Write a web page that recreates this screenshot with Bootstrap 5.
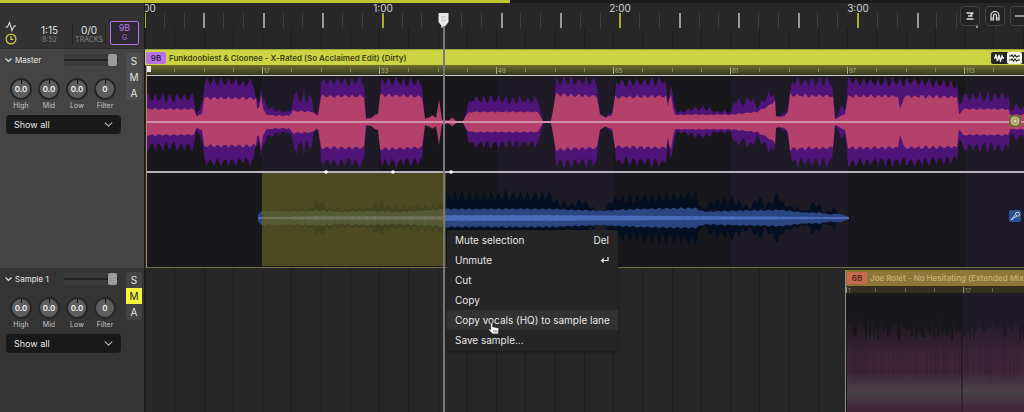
<!DOCTYPE html>
<html lang="en" data-bs-theme="dark">
<head>
<meta charset="utf-8">
<meta name="viewport" content="width=device-width, initial-scale=1">
<title>Mix editor</title>
<link href="https://cdn.jsdelivr.net/npm/bootstrap@5.3.0/dist/css/bootstrap.min.css" rel="stylesheet">
<style>
  :root { --accent: #cdd444; --side: 145px; }
  body { background: #272727; color: #e4e4e4; font: 400 9px/12px Inter, "Liberation Sans", sans-serif; overflow: hidden; }
  svg { display: block; }
  button { font: inherit; }
  .position-bar { height: 3px; background: #1b1b1b; border-radius: 0; }
  .position-bar .progress-bar { background: #bfc431; }
  .side { width: var(--side); flex: none; border-right: 1px solid #1c1c1c; }
  .top-row { height: 46px; }
  .top-row .side { background: #323232; border-bottom: 1px solid #2a2a2a; }
  .readout { font-size: 10px; line-height: 10px; text-align: center; }
  .readout small { display: block; font-size: 7px; line-height: 10px; color: #858585; }
  .status { padding: 0 5px 3px 4px; }
  .divided { border: solid #222; border-width: 0 1px; padding: 0 2px; margin-left: 14px; }
  .key-box { width: 29px; height: 24px; border: 1px solid #b673e6; border-radius: 2px; color: #b673e6; background: #2c2831; font-size: 9px; line-height: 11px; }
  .key-box small { color: inherit; }
  .track-master { height: 219px; }
  .track-master .side { background: #444; }
  .track-sample .side { background: #343434; }
  .strip { padding-right: 2px; }
  .strip-fields { padding: 1px 0 0 5px; }
  .fold { gap: 3px; color: inherit; font-size: 8px; line-height: 12px; }
  .volume { width: 54px; height: 12px; margin-right: 3px; appearance: none; background: linear-gradient(#222, #222) 0 5px / 100% 2px no-repeat #3a3a3a; border-radius: 2px; }
  .volume::-webkit-slider-thumb { appearance: none; width: 9px; height: 12px; border-radius: 2px; background: #9b9b9b; border: 0; }
  .mix-group { width: 16px; margin-top: 4px; border-radius: 3px; overflow: hidden; }
  .mix-btn { width: 16px; height: 16px; padding: 0; border: 0; border-radius: 0; background: #4c4c4c; color: #e4e4e4; font-size: 10px; line-height: 16px; }
  .track-sample .mix-btn { background: #444; }
  .track-sample .mix-btn.active { background: #f4f43c; color: #222; }
  .knobs { padding: 12px 0 0 2px; }
  .knob { width: 28px; text-align: center; font-size: 7px; line-height: 11px; color: #c4c4c4; }
  .knob output { display: block; width: 22px; height: 22px; margin: 0 auto; border: 2px solid #262626; border-radius: 50%; background: linear-gradient(#161616, #161616) center top / 1px 4px no-repeat #5e5e5e; color: #f0f0f0; font-size: 8px; font-weight: 600; line-height: 18px; padding: 0; }
  .stem-select { width: 115px; height: 19px; margin: 4px 0 0 1px; padding: 0 20px 0 8px; border: 0; border-radius: 4px; background-color: #191919; color: #e8e8e8; font-size: 9px; line-height: 19px; background-position: right 8px center; background-size: 9px 9px;
    --bs-form-select-bg-img: url("data:image/svg+xml,%3csvg xmlns='http://www.w3.org/2000/svg' viewBox='0 0 9 9'%3e%3cpath fill='none' stroke='%23ddd' stroke-width='1.3' d='M1 3l3.5 3L8 3'/%3e%3c/svg%3e"); }
  .lanes { min-width: 0; }
  .tool-strip { width: 64px; top: 3px; gap: 5px; overflow: hidden; }
  .tool { flex: none; width: 20px; height: 20px; padding: 0; border: 1px solid #444; border-radius: 4px; background: #242424; color: #ddd; display: grid; place-items: center; }
  .clip-title { height: 16px; gap: 3px; font-size: 8px; font-weight: 600; line-height: 14px; white-space: nowrap; overflow: hidden; }
  .clip-master { background: var(--accent); color: #3f4212; border-top: 1px solid #9a9f3b; }
  .clip-sample { background: #8e7639; color: #c5ad70; }
  .key-tag { width: 20px; height: 12px; margin-left: 1px; border-radius: 2px; background: #b673e6; color: #33204a; line-height: 12px; text-align: center; flex: none; }
  .clip-sample .key-tag { background: #c66a50; color: #55251b; }
  .view-switch { width: 33px; height: 12px; background: #262626; border-radius: 2px 0 0 2px; overflow: hidden; }
  .view-btn { width: 16px; height: 12px; padding: 0; border: 0; border-radius: 0; color: #fff; display: grid; place-items: center; }
  .view-btn.active { width: 15px; background: #f3f3ea; color: #222; border-radius: 2px; }
  .clip-body { border-left: 1px solid #b98a5c; margin-left: 1px; }
  .clip-outline { border-bottom: 1px solid #6d7040; }
  .sample-offset { margin: 2px 0 0 700px; border-left: 1px solid #8d8d8d; }
  .timeline-overlay { left: var(--side); }
  .playhead { left: 293px; top: 9px; bottom: 0; width: 11px; }
  .playhead::after { content: ""; flex: 1; width: 2px; background: #777; }
  .lane-menu { --bs-dropdown-bg: #252525; --bs-dropdown-padding-y: 0; --bs-dropdown-min-width: 0; --bs-dropdown-border-width: 0; --bs-dropdown-link-color: #e6e6e6; --bs-dropdown-link-hover-bg: #323232; left: 302px; top: 227px; width: 171px; padding-bottom: 1px; border-radius: 3px; font-size: 10px; line-height: 20px; box-shadow: 0 1px 3px #1118; }
  .lane-menu .dropdown-item { padding: 0 9px 0 8px; }
  .lane-menu .dropdown-item.hovered { background: #323232; }
  .hand { left: 343px; top: 319px; z-index: 1001; }
  .stem-pin { right: 3px; }
  .pin-drums { top: 50px; }
  .pin-vocals { top: 145px; }
</style>
</head>
<body>
<div class="d-flex flex-column vh-100">
  <div class="progress position-bar flex-shrink-0" role="progressbar" aria-label="Mix position" aria-valuenow="50" aria-valuemin="0" aria-valuemax="100">
    <div class="progress-bar" style="width:49.8%"></div>
  </div>

  <div class="d-flex flex-column flex-grow-1 position-relative overflow-hidden">
    <!-- status and time ruler -->
    <header class="d-flex top-row flex-shrink-0">
      <div class="side d-flex align-items-end status">
        <div class="d-flex flex-column pe-4">
          <svg width="13" height="13" viewBox="0 0 13 13" fill="none" stroke="#ddd" stroke-width="1.1"><path d="M1.500 7h2l2-4.500 2.500 8 2-4.500h2"/></svg>
          <svg width="13" height="12" viewBox="0 0 13 12" fill="none" stroke="#d3d046" stroke-width="1.200"><circle cx="7" cy="6" r="4.900"/><path d="M7 3v3.300h2.500"/></svg>
        </div>
        <div class="readout">1:15<small>8:52</small></div>
        <div class="readout divided">0/0<small>TRACKS</small></div>
        <div class="readout key-box ms-auto">9B<small>G</small></div>
      </div>
      <div class="lanes flex-grow-1 position-relative">
        <svg id="ruler" width="100%" height="46"></svg>
        <div class="tool-strip position-absolute end-0 d-flex">
          <button class="tool" aria-label="Quantize"><svg width="10" height="10" viewBox="0 0 10 10" fill="none" stroke="currentColor" stroke-width="1.300"><path d="M1.500 2h7M3 5h4.500M1.500 8h7M8 2L5.500 4.500"/></svg></button>
          <button class="tool" aria-label="Snap"><svg width="10" height="10" viewBox="0 0 10 10" fill="none" stroke="currentColor" stroke-width="1.200"><path d="M1 9V4.500a4 4 0 0 1 8 0V9H6.500V4.700a1.500 1.500 0 0 0-3 0V9zM1 7h2.500M6.500 7H9"/></svg></button>
          <button class="tool" aria-label="Zoom out"><svg width="10" height="10" viewBox="0 0 10 10" stroke="currentColor" stroke-width="1.200"><path d="M0 5h10"/></svg></button>
        </div>
      </div>
    </header>

    <!-- master track -->
    <section class="d-flex track-master flex-shrink-0">
      <div class="side" data-track="Master"></div>
      <div class="lanes flex-grow-1 clip-outline">
        <div class="clip-title clip-master d-flex align-items-center">
          <span class="key-tag">9B</span><span>Funkdoobiest &amp; Cloonee - X-Rated (So Acclaimed Edit) (Dirty)</span>
          <div class="view-switch d-flex ms-auto">
            <button class="view-btn bg-transparent" aria-label="Waveform"><svg width="10" height="8" viewBox="0 0 10 8" fill="none" stroke="currentColor" stroke-width="1.300"><path d="M0 4h1l1-3 1.500 6L5 1l1.500 6L8 2l.8 2H10"/></svg></button>
            <button class="view-btn active" aria-label="Stems"><svg width="11" height="8" viewBox="0 0 11 8" fill="none" stroke="currentColor" stroke-width="1.200"><path d="M0 2h2l1-1 1.500 2L6 1l1.500 2L9 2h2M0 6h2l1-1 1.500 2L6 5l1.500 2L9 6h2"/></svg></button>
          </div>
        </div>
        <div class="clip-body position-relative">
          <svg id="masterLane" width="100%" height="202"></svg>
          <svg class="stem-pin pin-drums position-absolute" width="12" height="12" viewBox="0 0 12 12"><rect width="12" height="12" rx="2" fill="#6f6b35"/><circle cx="6" cy="6" r="4" fill="#a7a36b" stroke="#d0cc95"/><circle cx="6" cy="6" r="1.500" fill="#ddd8a8"/></svg>
          <svg class="stem-pin pin-vocals position-absolute" width="12" height="12" viewBox="0 0 12 12"><rect width="12" height="12" rx="2" fill="#2f4f93"/><path d="M2 10l4.500-5.500 1.500 1.300zM6.500 4.500a2 2 0 1 1 1.800 1.700z" fill="none" stroke="#c7d4f0"/></svg>
        </div>
      </div>
    </section>

    <!-- sample track -->
    <section class="d-flex track-sample flex-grow-1 overflow-hidden">
      <div class="side" data-track="Sample 1" data-muted="true"></div>
      <div class="lanes flex-grow-1 position-relative">
        <svg id="sampleGrid" class="position-absolute" width="100%" height="100%"></svg>
        <div class="sample-offset position-relative">
          <div class="clip-title clip-sample d-flex align-items-center">
            <span class="key-tag">6B</span><span>Joe Rolét - No Hesitating (Extended Mix)</span>
          </div>
          <svg id="sampleLane" width="100%" height="600"></svg>
        </div>
      </div>
    </section>

    <div class="timeline-overlay position-absolute top-0 bottom-0 end-0 pe-none">
      <div class="playhead position-absolute d-flex flex-column align-items-center">
        <svg width="11" height="15" viewBox="0 0 11 15"><path d="M.5 1h10v9L7 14.500H4L.5 10z" fill="#e8e8e8"/><path d="M3 5h5M3 8h5" stroke="#bbb"/></svg>
      </div>
      <ul class="dropdown-menu lane-menu show pe-auto">
        <li><button class="dropdown-item d-flex justify-content-between">Mute selection<span>Del</span></button></li>
        <li><button class="dropdown-item d-flex justify-content-between align-items-center">Unmute<svg width="9" height="8" viewBox="0 0 9 8" fill="none" stroke="currentColor" stroke-width="1.200"><path d="M8 1v3.500H2M3.800 2.500l-2.300 2 2.300 2"/></svg></button></li>
        <li><button class="dropdown-item">Cut</button></li>
        <li><button class="dropdown-item">Copy</button></li>
        <li><button class="dropdown-item hovered">Copy vocals (HQ) to sample lane</button></li>
        <li><button class="dropdown-item">Save sample...</button></li>
      </ul>
      <svg class="hand position-absolute" width="12" height="13" viewBox="0 0 12 13"><path d="M3.500 1c.9 0 1.200.6 1.200 1.300v2.500l4.800.9c1 .2 1.500.8 1.400 1.800L10.300 12H4.600L1 8.200c-.5-.8.300-1.500 1.100-1l.5.400V2.200C2.600 1.500 2.800 1 3.500 1z" fill="#fff" stroke="#222" stroke-width=".7"/><path d="M5.700 8v2.500M7.300 8v2.500M8.900 8v2.500" stroke="#555" stroke-width=".7"/></svg>
    </div>
  </div>
</div>

<script src="https://cdn.jsdelivr.net/npm/bootstrap@5.3.0/dist/js/bootstrap.bundle.min.js"></script>
<script>
// channel strips
document.querySelectorAll('[data-track]').forEach(el => {
  const { track, muted } = el.dataset;
  const knobs = [['High', '0.0'], ['Mid', '0.0'], ['Low', '0.0'], ['Filter', '0']]
    .map(([n, v]) => `<div class="knob"><output aria-label="${n}">${v}</output>${n}</div>`).join('');
  el.innerHTML = `<div class="strip d-flex justify-content-between">
    <div class="strip-fields">
      <div class="d-flex align-items-center justify-content-between pt-1">
        <button class="btn fold border-0 p-0 d-flex align-items-center"><svg width="7" height="8" viewBox="0 0 7 8" fill="none" stroke="currentColor" stroke-width="1.2"><path d="M.5 2.500l3 3 3-3"/></svg>${track}</button>
        <input type="range" class="volume" value="98" aria-label="${track} volume">
      </div>
      <div class="knobs d-flex">${knobs}</div>
      <select class="form-select stem-select" aria-label="${track} automation"><option>Show all</option></select>
    </div>
    <div class="mix-group d-flex flex-column align-self-start">
      <button class="mix-btn">S</button><button class="mix-btn ${muted ? 'active' : ''}">M</button><button class="mix-btn">A</button>
    </div></div>`;
});

// timeline drawing; x values are measured from the window edge
const OX = 145, BAR4 = 29.25, MINUTE = 237.7, LIMIT = ruler.clientWidth - 12;
let seed = 7;
const rnd = () => (seed = (seed * 16807) % 2147483647) / 2147483647;
const rect = (x, y, w, h, f) => `<rect x="${x}" y="${y}" width="${w}" height="${h}" fill="${f}"/>`;

let s = '';
for (let k = 0; k * MINUTE / 12 < LIMIT; k++) {
  const x = Math.round(144 + k * MINUTE / 12) - OX;
  const c = k % 12 == 0 ? '#a8a832' : k % 3 == 0 ? '#999' : '#404038';
  s += rect(x, 10, k % 3 ? 1 : 2, 15, c);
  if (k % 12 == 0) s += `<text x="${x + 1}" y="9" font-size="10" text-anchor="middle" fill="#d0d0d0">${k / 12}:00</text>`;
}
for (let k = 0; k < 130; k++) s += rect(Math.round(k * BAR4), 25, 1, 21, '#1d1d1d');
ruler.innerHTML = s;

function envelope(pts, jitter) {
  const out = [];
  let i = 0;
  for (let x = pts[0][0]; x <= pts[pts.length - 1][0]; x++) {
    while (i < pts.length - 2 && pts[i + 1][0] < x) i++;
    const [x0, a0] = pts[i], [x1, a1] = pts[i + 1];
    const a = a0 + (a1 - a0) * (x - x0) / (x1 - x0);
    const beat = Math.pow(Math.abs(Math.sin((x - 2) * Math.PI / 7.3)), 1.5);
    const depth = a > 38 ? jitter * .6 : jitter;
    out.push([x, Math.max(1, a * (1 - depth * beat - depth * .5 * rnd()))]);
  }
  return out;
}
function wave(pts, cy, off, fill, jitter) {
  const e = envelope(pts, jitter);
  const up = e.map(([x, a]) => `${x - off} ${(cy - a).toFixed(1)}`);
  const dn = e.map(([x, a]) => `${x - off} ${(cy + a).toFixed(1)}`).reverse();
  return `<path d="M${up.concat(dn).join('L')}Z" fill="${fill}"/>`;
}
const pair = str => str.split(' ').map(p => p.split(':').map(Number));
const purple = pair('146:31 194:31 196:10 200:15 204:40 207:47 254:44 257:25 259:22 261:46 263:27 267:20 275:15 288:12 292:22 297:40 301:20 304:42 307:22 312:37 314:12 318:8 321:46 364:46 366:5 372:5 379:12 381:46 422:46 425:4 436:3 442:3 463:1 468:20 472:29 538:27 543:1 551:2 554:20 556:46 597:46 600:8 606:5 611:13 614:12 616:45 665:46 668:25 671:46 674:20 678:12 690:16 706:18 715:13 731:13 735:27 745:23 750:31 757:20 774:38 776:6 785:10 789:25 792:46 832:46 835:4 841:19 845:19 848:46 910:46 957:42 959:20 963:32 1008:32 1010:14 1015:22 1022:16 4000:16');
const pink = pair('146:14 194:14 197:6 202:9 204:26 256:26 257:14 259:15 261:31 263:15 266:8 275:7 289:7 293:12 313:11 316:7 318:8 321:28 364:28 366:3 372:5 378:9 380:29 422:28 425:3 432:7 436:5 439:24 442:2 444:3 448:1 452:5 456:1 463:1 467:9 472:11 538:11 543:1 551:1 554:20 556:30 597:28 600:8 606:5 612:8 615:27 666:28 668:16 669:25 671:31 673:15 675:8 730:8 757:11 768:17 775:23 776:6 784:6 788:12 790:29 833:28 835:3 845:9 848:28 898:28 900:13 904:28 957:27 959:8 963:14 1008:14 1010:8 4000:8');
const navy = pair('262:9 310:11 320:24 328:12 370:12 378:22 390:14 410:14 440:16 445:29 550:29 557:20 570:16 583:22 595:10 604:8 612:24 680:28 695:31 700:18 703:10 712:20 731:24 750:13 759:27 765:14 778:30 784:17 800:11 806:9 812:18 820:15 824:7 834:12 840:4 849:1');
const blue = pair('258:3 261:8 310:8 320:9 340:7 370:8 400:7 445:10 500:10 550:10 600:8 640:10 695:11 705:7 735:8 780:9 805:6 820:6 830:4 838:5 845:3 849:1');
const core = pair('258:1 275:1 310:2 440:2 445:3 560:3 700:2 849:1');

function bands(first, y, h, off) {
  let t = '';
  for (let k = 0; k < 34; k++) t += rect(Math.round(first + k * 117.2) - off, y, 118, h, k % 2 ? '#1e1b26' : '#18171c');
  return t;
}
const M = 147;
s = '<defs><linearGradient id="olive" x2="0" y2="1"><stop stop-color="#6b6f32"/><stop offset="1" stop-color="#35371f"/></linearGradient></defs>';
s += rect(0, 0, '100%', 10, 'url(#olive)');
s += bands(145, 10, 192, M);
for (let k = 0; k * BAR4 < LIMIT; k++) {
  const x = Math.round(145 + k * BAR4) - M;
  if (k && k % 4 == 0) s += rect(x, 2, 1, 7, '#b0b188') + `<text x="${x + 2}" y="8" font-size="6" fill="#b0b188">${k * 4 + 1}</text>`;
  else s += rect(x, 3, 1, 4, '#85875a');
}
s += rect(0, 10, '100%', 1, '#c9c9c9');
s += wave(purple, 57, M, '#4e1478', .26) + wave(pink, 57, M, '#b4416b', .1);
s += rect(0, 56, '100%', 2, '#d091a8');
s += wave(navy, 153, M, '#050f22', .3) + wave(blue, 153, M, '#2b4580', .12) + wave(core, 153, M, '#4b6cbd', .1);
s += rect(262 - M, 107, 184, 94, '#4b4a22');
s += `<svg x="${262 - M}" width="184" height="202">` + wave(navy, 153, 262, '#414320', .3) + wave(blue, 153, 262, '#535a34', .15) + wave(core, 153, 262, '#71745a', .2) + '</svg>';
s += rect(0, 106, '100%', 2, '#b7b1bb');
for (const x of [326, 393, 451]) s += `<circle cx="${x - M}" cy="107" r="1.800" fill="#fff"/>`;
s += rect(0, 1, 4, 6, '#eee');
masterLane.innerHTML = s;

// sample lane
s = '';
for (let k = 0; k < 130; k++) s += rect(Math.round(k * BAR4), 0, 1, '100%', '#1d1d1d');
sampleGrid.innerHTML = s;
s = `<defs><linearGradient id="haze" gradientUnits="userSpaceOnUse" x1="0" y1="30" x2="0" y2="180"><stop stop-color="#43263a" stop-opacity="0"/><stop offset=".25" stop-color="#43263a" stop-opacity=".8"/><stop offset="1" stop-color="#4a2838"/></linearGradient>
<linearGradient id="mid" x2="0" y2="1"><stop stop-color="#4a4248" stop-opacity="0"/><stop offset=".5" stop-color="#4a4248"/><stop offset="1" stop-color="#4a4248" stop-opacity="0"/></linearGradient></defs>`;
s += bands(846, 0, 600, 846) + rect(0, 0, '100%', 7, '#33301f');
for (let k = 0; k * BAR4 < sampleLane.clientWidth - 12; k++) {
  const x = Math.round(k * BAR4);
  s += k % 4 ? rect(x, 2, 1, 4, '#66644c') : rect(x, 1, 1, 6, '#99967c') + `<text x="${x + 2}" y="7" font-size="6" fill="#8f8c72">${k * 4 + 1}</text>`;
}
for (let x = 1; x < 1800; x += 2) {
  const a = 50 + rnd() * 22;
  s += `<rect x="${x}" y="${105 - a}" width="2" height="${a * 2}" fill="url(#haze)"/>`;
  if (rnd() > .5) s += rect(x, 50, 1, 40 + rnd() * 20, '#2b1d2a80');
}
s += rect(1, 86, '100%', 38, 'url(#mid)') + rect(115, 45, 2, 120, '#1c172080');
sampleLane.innerHTML = s;
</script>
</body>
</html>
